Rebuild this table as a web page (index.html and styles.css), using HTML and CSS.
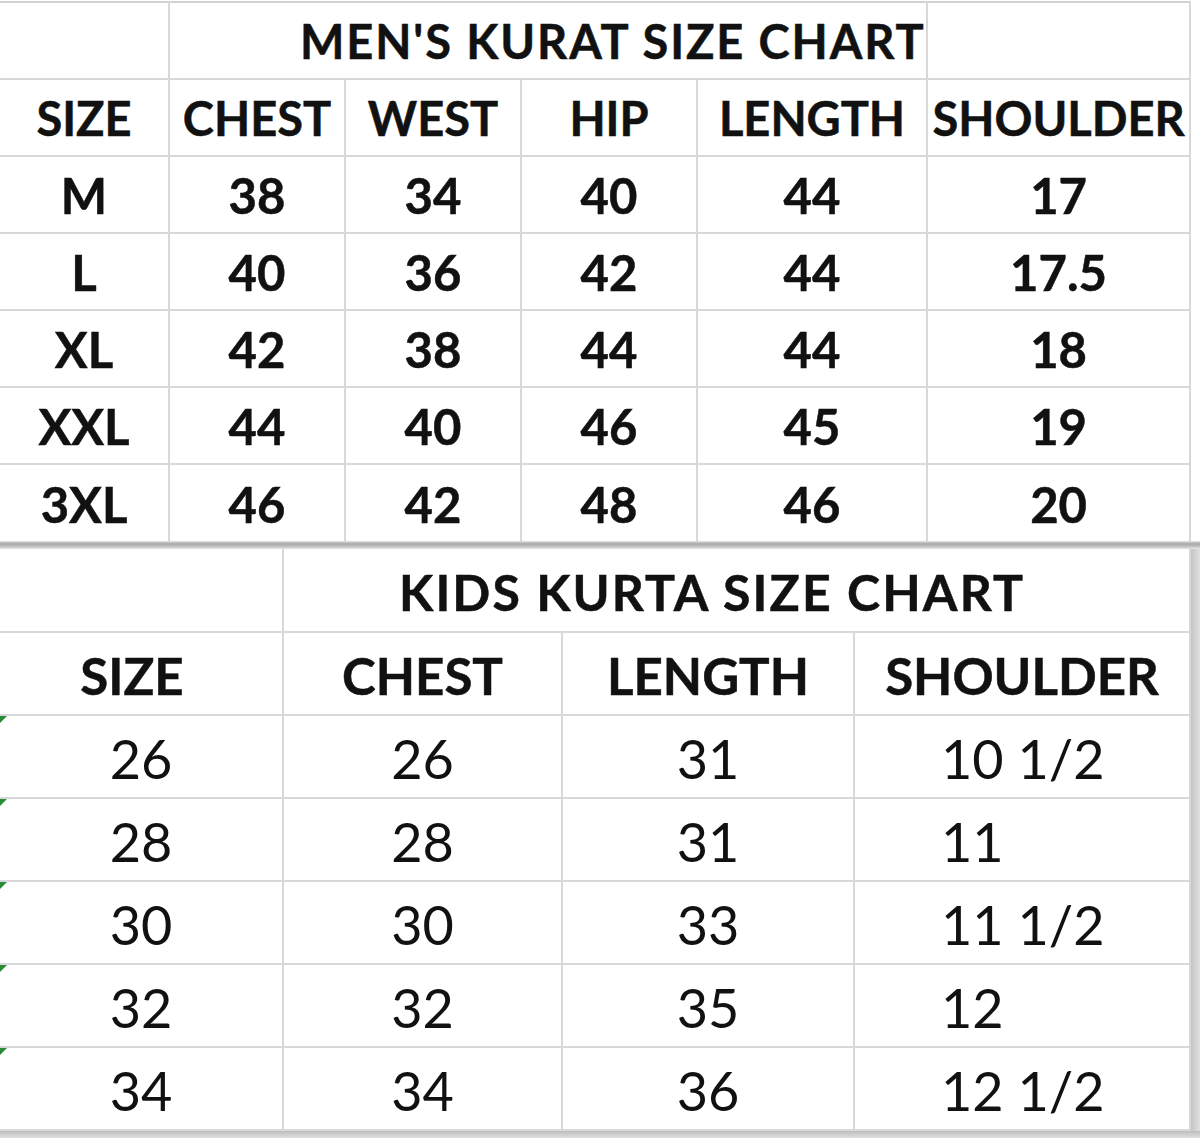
FILE: index.html
```html
<!DOCTYPE html>
<html>
<head>
<meta charset="utf-8">
<title>Size Charts</title>
<link rel="stylesheet" href="styles.css">
</head>
<body>
<div class="page">
  <table class="chart men">
    <colgroup>
      <col class="m1"><col class="m2"><col class="m3"><col class="m4"><col class="m5"><col class="m6">
    </colgroup>
    <tr class="title-row">
      <td></td>
      <td colspan="4" class="title men-title">MEN'S KURAT SIZE CHART</td>
      <td></td>
    </tr>
    <tr class="head-row">
      <td>SIZE</td><td>CHEST</td><td>WEST</td><td>HIP</td><td>LENGTH</td><td>SHOULDER</td>
    </tr>
    <tr><td>M</td><td>38</td><td>34</td><td>40</td><td>44</td><td>17</td></tr>
    <tr><td>L</td><td>40</td><td>36</td><td>42</td><td>44</td><td>17.5</td></tr>
    <tr><td>XL</td><td>42</td><td>38</td><td>44</td><td>44</td><td>18</td></tr>
    <tr><td>XXL</td><td>44</td><td>40</td><td>46</td><td>45</td><td>19</td></tr>
    <tr class="last"><td>3XL</td><td>46</td><td>42</td><td>48</td><td>46</td><td>20</td></tr>
  </table>

  <div class="sep"></div>

  <div class="kids-wrap">
    <table class="chart kids">
      <colgroup>
        <col class="k1"><col class="k2"><col class="k3"><col class="k4">
      </colgroup>
      <tr class="title-row">
        <td></td>
        <td colspan="3" class="title kids-title">KIDS KURTA SIZE CHART</td>
      </tr>
      <tr class="head-row">
        <td class="first-head">SIZE</td><td>CHEST</td><td>LENGTH</td><td>SHOULDER</td>
      </tr>
      <tr class="data"><td class="flag">26</td><td>26</td><td>31</td><td class="sh">10 1/2</td></tr>
      <tr class="data"><td class="flag">28</td><td>28</td><td>31</td><td class="sh">11</td></tr>
      <tr class="data"><td class="flag">30</td><td>30</td><td>33</td><td class="sh">11 1/2</td></tr>
      <tr class="data"><td class="flag">32</td><td>32</td><td>35</td><td class="sh">12</td></tr>
      <tr class="data"><td class="flag">34</td><td>34</td><td>36</td><td class="sh">12 1/2</td></tr>
    </table>
    <div class="edge"></div>
  </div>
  <div class="bottom-shadow"></div>
</div>
</body>
</html>
```

FILE: styles.css
```css
html, body {
  margin: 0;
  padding: 0;
  background: #ffffff;
}

.page {
  width: 1200px;
  height: 1138px;
  overflow: hidden;
  display: flex;
  flex-direction: column;
  font-family: Lato, "Open Sans", "Liberation Sans", sans-serif;
  color: #111111;
}

.chart {
  border-collapse: collapse;
  table-layout: fixed;
  width: 1190px;
  flex: none;
}

.chart td {
  border: 2px solid #d8d8dc;
  padding: 0;
  text-align: center;
  vertical-align: middle;
  white-space: nowrap;
  overflow: hidden;
}

/* Men's chart */
.men {
  margin-top: 1px;
  font-weight: 700;
  -webkit-text-stroke: 0.5px #111111;
}
.men .m1 { width: 169px; }
.men .m2 { width: 176px; }
.men .m3 { width: 176px; }
.men .m4 { width: 176px; }
.men .m5 { width: 230px; }
.men .m6 { width: 263px; }

.men tr { height: 77px; }
.men td {
  font-size: 49px;
  line-height: 1;
  padding-top: 2px;
}
.men .head-row td { font-size: 47px; }
.men tr:first-child td { border-top-color: #d2d2d6; }
.men tr.last td { border-bottom: none; }
.men td:first-child { border-left: none; }

.men-title {
  text-align: left !important;
  padding-left: 130px !important;
  font-size: 47px !important;
  letter-spacing: 1.9px;
}

/* separator shadow */
.sep {
  height: 8px;
  flex: none;
  background: linear-gradient(#e6e6e6, #a8a8a8 35%, #bdbdbd 65%, #e8e8e8);
}

/* Kids chart */
.kids-wrap {
  display: flex;
  flex: none;
}
.kids {
  font-weight: 400;
}
.kids .k1 { width: 283px; }
.kids .k2 { width: 279px; }
.kids .k3 { width: 292px; }
.kids .k4 { width: 336px; }

.kids tr { height: 83px; }
.kids tr.title-row { height: 83px; }
.kids td {
  font-size: 54px;
  line-height: 1;
  padding-top: 4px;
  position: relative;
}
.kids tr:first-child td { border-top: none; }
.kids td:first-child { border-left: none; }
.kids .head-row td,
.kids .title {
  font-weight: 700;
  -webkit-text-stroke: 0.5px #111111;
}
.kids .head-row td { font-size: 51px; }
.kids .head-row .first-head { padding-right: 18px; }

.kids-title {
  text-align: left !important;
  padding-left: 115px !important;
  font-size: 50px !important;
  letter-spacing: 2.1px;
}

.kids .sh {
  text-align: left;
  padding-left: 86px;
}

.kids .flag::before {
  content: "";
  position: absolute;
  left: -2px;
  top: 0;
  width: 0;
  height: 0;
  border-top: 9px solid #2b8a36;
  border-right: 9px solid transparent;
}

.edge {
  width: 10px;
  flex: none;
  background: linear-gradient(90deg, #c4c4c4, #e4e4e4);
}

.bottom-shadow {
  flex: 1;
  background: linear-gradient(#bdbdbd, #e0e0e0);
}
```
